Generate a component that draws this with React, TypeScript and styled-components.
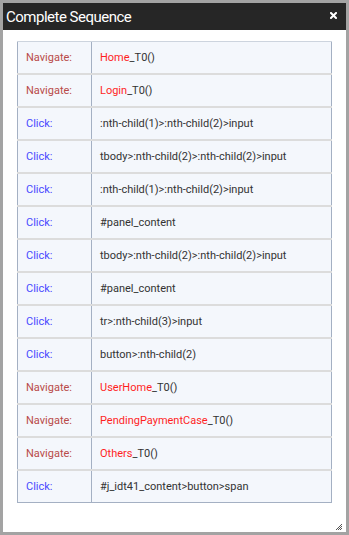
import styled, { createGlobalStyle } from 'styled-components';

const GlobalStyle = createGlobalStyle`
  html, body {
    margin: 0;
    padding: 0;
    background: #ffffff;
  }
  * {
    box-sizing: border-box;
  }
`;

type Step = {
  action: 'Navigate' | 'Click';
  target: string;
  suffix?: string;
};

const steps: Step[] = [
  { action: 'Navigate', target: 'Home', suffix: '_T0()' },
  { action: 'Navigate', target: 'Login', suffix: '_T0()' },
  { action: 'Click', target: ':nth-child(1)>:nth-child(2)>input' },
  { action: 'Click', target: 'tbody>:nth-child(2)>:nth-child(2)>input' },
  { action: 'Click', target: ':nth-child(1)>:nth-child(2)>input' },
  { action: 'Click', target: '#panel_content' },
  { action: 'Click', target: 'tbody>:nth-child(2)>:nth-child(2)>input' },
  { action: 'Click', target: '#panel_content' },
  { action: 'Click', target: 'tr>:nth-child(3)>input' },
  { action: 'Click', target: 'button>:nth-child(2)' },
  { action: 'Navigate', target: 'UserHome', suffix: '_T0()' },
  { action: 'Navigate', target: 'PendingPaymentCase', suffix: '_T0()' },
  { action: 'Navigate', target: 'Others', suffix: '_T0()' },
  { action: 'Click', target: '#j_idt41_content>button>span' },
];

export default function App() {
  return (
    <>
      <GlobalStyle />
      <Dialog>
        <TitleBar>
          <Title>Complete Sequence</Title>
          <CloseButton aria-label="close">
            <svg width="7" height="7" viewBox="0 0 7 7">
              <path d="M1 1L6 6M6 1L1 6" stroke="#ffffff" strokeWidth="2" strokeLinecap="square" />
            </svg>
          </CloseButton>
        </TitleBar>
        <Body>
          <Table>
            {steps.map((s, i) => (
              <Row key={i} $last={i === steps.length - 1}>
                <ActionCell $kind={s.action}>{s.action}:</ActionCell>
                <TargetCell>
                  {s.suffix ? (
                    <>
                      <PageName>{s.target}</PageName>
                      {s.suffix}
                    </>
                  ) : (
                    s.target
                  )}
                </TargetCell>
              </Row>
            ))}
          </Table>
          <Grip>
            <svg width="8" height="8" viewBox="0 0 8 8">
              <path d="M7 1L1 7M7 3L3 7M7 5L5 7" stroke="#555555" strokeWidth="1" />
            </svg>
          </Grip>
        </Body>
      </Dialog>
    </>
  );
}

const Dialog = styled.div`
  width: 349px;
  height: 535px;
  border: 3px solid #a3a3a3;
  display: flex;
  flex-direction: column;
  background: #ffffff;
  font-family: Roboto, 'Liberation Sans', sans-serif;
`;

const TitleBar = styled.div`
  height: 27px;
  background: #262626;
  display: flex;
  align-items: center;
  justify-content: space-between;
  padding: 0 9px 0 3px;
`;

const Title = styled.span`
  color: #ffffff;
  font-size: 15px;
  letter-spacing: -0.5px;
`;

const CloseButton = styled.span`
  display: flex;
  margin-top: -3px;
`;

const Body = styled.div`
  flex: 1;
  position: relative;
  padding: 11px 14px 0 14px;
`;

const Table = styled.div`
  display: flex;
  flex-direction: column;
  border-top: 1px solid #cdd4de;
`;

const Row = styled.div<{ $last: boolean }>`
  display: flex;
  height: ${(p) => (p.$last ? '32px' : '33px')};
  border-bottom: ${(p) => (p.$last ? '1px solid #a4b0c3' : '2px solid #dcdcdc')};
  background: #f4f7fc;
  font-size: 11px;
`;

const ActionCell = styled.div<{ $kind: 'Navigate' | 'Click' }>`
  width: 75px;
  display: flex;
  align-items: center;
  padding-left: 8px;
  border-left: 1px solid #a4b0c3;
  border-right: 1px solid #a4b0c3;
  color: ${(p) => (p.$kind === 'Navigate' ? '#b94a48' : '#4a4aff')};
`;

const TargetCell = styled.div`
  flex: 1;
  display: flex;
  align-items: center;
  padding-left: 8px;
  border-right: 1px solid #a4b0c3;
  color: #333333;
  white-space: nowrap;
`;

const PageName = styled.span`
  color: #ff1f1f;
`;

const Grip = styled.div`
  position: absolute;
  right: 3px;
  bottom: 1px;
  display: flex;
`;
